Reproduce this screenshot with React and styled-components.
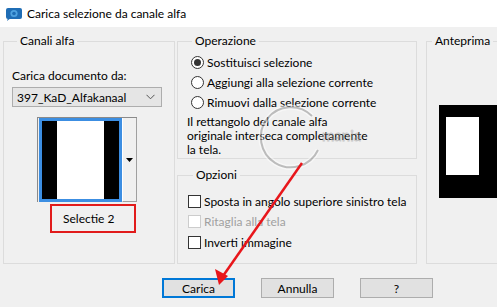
import React from 'react';
import styled, { createGlobalStyle } from 'styled-components';

const Global = createGlobalStyle`
  html, body { margin: 0; padding: 0; background: #f0f0f0; overflow: hidden; }
  body { font-family: Lato, "Noto Sans", sans-serif; font-size: 12px; color: #000; }
  * { box-sizing: border-box; }
`;

const Window = styled.div`
  position: relative;
  width: 540px;
  height: 307px;
  background: #f0f0f0;
  display: flex;
  flex-direction: column;
  overflow: hidden;
  white-space: nowrap;
`;

const TitleBar = styled.div`
  height: 27px;
  flex: none;
  background: #fff;
  display: flex;
  align-items: center;
  gap: 4px;
  padding-left: 5px;
  font-size: 12px;
`;

const Body = styled.div`
  display: flex;
  flex-direction: column;
  padding: 7px 0 0 3px;
`;

const Panels = styled.div`
  display: flex;
  align-items: flex-start;
`;

const Column = styled.div`
  display: flex;
  flex-direction: column;
  gap: ${p => p.$gap || 0}px;
  margin-left: ${p => p.$ml || 0}px;
`;

const Group = styled.fieldset`
  margin: 0;
  width: ${p => p.$w}px;
  height: ${p => p.$h}px;
  border: 1px solid #dcdcdc;
  padding: ${p => p.$pad || '0 0 0 8px'};
  display: flex;
  flex-direction: column;
  legend {
    margin-left: 5px;
    padding: 0 3px;
    line-height: 14px;
  }
`;

const Label = styled.div`
  margin-top: ${p => p.$mt || 0}px;
  line-height: 14px;
`;

const Select = styled.div`
  margin-top: 4px;
  width: 150px;
  height: 20px;
  border: 1px solid #adadad;
  background: #e5e5e5;
  display: flex;
  align-items: center;
  justify-content: space-between;
  padding: 0 6px 0 4px;
`;

const ThumbWrap = styled.div`
  margin: 10px 0 0 25px;
  width: 100px;
  height: 85px;
  display: flex;
  border-top: 1px solid #8a8a8a;
  border-left: 1px solid #8a8a8a;
`;

const ThumbImage = styled.div`
  width: 83px;
  height: 84px;
  border: 3px solid #3c8ee2;
  margin-left: 1px;
  display: flex;
`;

const Stripe = styled.div`
  width: ${p => p.$w}px;
  background: ${p => p.$c};
`;

const ThumbButton = styled.div`
  flex: 1;
  background: #f0f0f0;
  border-left: 1px solid #fff;
  border-right: 1px solid #a0a0a0;
  border-bottom: 1px solid #a0a0a0;
  display: flex;
  align-items: center;
  justify-content: center;
`;

const Highlight = styled.div`
  margin: 2px 0 0 38px;
  width: 86px;
  height: 29px;
  border: 2px solid #e11b1b;
  display: flex;
  align-items: center;
  padding-left: 11px;
`;

const OptionRow = styled.label`
  display: flex;
  align-items: center;
  gap: 3px;
  height: ${p => p.$h || 20}px;
  margin-left: ${p => p.$ml || 0}px;
  color: ${p => (p.$disabled ? '#a0a0a0' : '#000')};
`;

const Radio = styled.span`
  width: 13px;
  height: 13px;
  border: 1px solid #333;
  border-radius: 50%;
  background: #fff;
  display: flex;
  align-items: center;
  justify-content: center;
  &::after {
    content: '';
    width: 7px;
    height: 7px;
    border-radius: 50%;
    background: ${p => (p.$checked ? '#333' : 'transparent')};
  }
`;

const Check = styled.span`
  flex: none;
  width: 13px;
  height: 13px;
  border: 1px solid ${p => (p.$disabled ? '#cccccc' : '#333')};
  background: #fff;
`;

const Description = styled.div`
  margin-top: 3px;
  line-height: 14px;
`;

const Preview = styled.div`
  margin: 57px 0 0 12px;
  width: 72px;
  height: 93px;
  background: #000;
  padding: 12px 0 0 7px;
`;

const PreviewWhite = styled.div`
  width: 33px;
  height: 58px;
  background: #fff;
`;

const Buttons = styled.div`
  display: flex;
  gap: 26px;
  margin-top: 14px;
  padding-left: 159px;
`;

const Button = styled.div`
  width: 73px;
  height: 20px;
  background: #e1e1e1;
  border: ${p => (p.$default ? '2px solid #0078d7' : '1px solid #adadad')};
  display: flex;
  align-items: center;
  justify-content: center;
`;

const Overlay = styled.svg`
  position: absolute;
  left: 0;
  top: 0;
  pointer-events: none;
`;

function AppIcon() {
  return (
    <svg width="18" height="14" viewBox="0 0 18 14">
      <rect x="1" y="1" width="16" height="11" rx="2" fill="#1f6db5" />
      <path d="M3 11 L2 14 L6 11 Z" fill="#1f6db5" />
      <circle cx="9" cy="6.5" r="3.6" fill="#4fa3e0" />
      <circle cx="9" cy="6.5" r="1.8" fill="#1f6db5" />
    </svg>
  );
}

function Chevron() {
  return (
    <svg width="9" height="6" viewBox="0 0 9 6">
      <path d="M0.5 0.8 L4.5 4.8 L8.5 0.8" fill="none" stroke="#555" strokeWidth="1" />
    </svg>
  );
}

export default function App() {
  return (
    <>
      <Global />
      <Window>
        <TitleBar>
          <AppIcon />
          <span>Carica selezione da canale alfa</span>
        </TitleBar>
        <Body>
          <Panels>
            <Group $w={172} $h={230}>
              <legend>Canali alfa</legend>
              <Label $mt={21}>Carica documento da:</Label>
              <Select>
                <span>397_KaD_Alfakanaal</span>
                <Chevron />
              </Select>
              <ThumbWrap>
                <ThumbImage>
                  <Stripe $w={15} $c="#000" />
                  <Stripe $w={47} $c="#fff" />
                  <Stripe $w={15} $c="#000" />
                </ThumbImage>
                <ThumbButton>
                  <svg width="7" height="4" viewBox="0 0 7 4">
                    <path d="M0 0 H7 L3.5 4 Z" fill="#000" />
                  </svg>
                </ThumbButton>
              </ThumbWrap>
              <Highlight>Selectie 2</Highlight>
            </Group>
            <Column $gap={9} $ml={2}>
              <Group $w={240} $h={125} $pad="0 0 0 9px">
                <legend>Operazione</legend>
                <OptionRow $ml={4} style={{ marginTop: 4 }}>
                  <Radio $checked />
                  Sostituisci selezione
                </OptionRow>
                <OptionRow $ml={4}>
                  <Radio />
                  Aggiungi alla selezione corrente
                </OptionRow>
                <OptionRow $ml={4}>
                  <Radio />
                  Rimuovi dalla selezione corrente
                </OptionRow>
                <Description>
                  Il rettangolo del canale alfa
                  <br />
                  originale interseca completamente
                  <br />
                  la tela.
                </Description>
              </Group>
              <Group $w={240} $h={96} $pad="0 0 0 10px">
                <legend>Opzioni</legend>
                <OptionRow $h={20.5} style={{ marginTop: 9 }}>
                  <Check />
                  Sposta in angolo superiore sinistro tela
                </OptionRow>
                <OptionRow $h={20.5} $disabled>
                  <Check $disabled />
                  Ritaglia alla tela
                </OptionRow>
                <OptionRow $h={20.5}>
                  <Check />
                  Inverti immagine
                </OptionRow>
              </Group>
            </Column>
            <Column $ml={9}>
              <Group $w={110} $h={230} $pad="0">
                <legend>Anteprima</legend>
                <Preview>
                  <PreviewWhite />
                </Preview>
              </Group>
            </Column>
          </Panels>
          <Buttons>
            <Button $default>Carica</Button>
            <Button>Annulla</Button>
            <Button>?</Button>
          </Buttons>
        </Body>
        <Overlay width="540" height="307" viewBox="0 0 540 307">
          <g opacity="0.5">
            <path d="M312 116 A30 30 0 1 0 318 150" fill="none" stroke="#fff" strokeWidth="5" />
            <path d="M312 116 A30 30 0 1 0 318 150" fill="none" stroke="#8a8a8a" strokeWidth="2" />
            <text x="322" y="141" fontFamily="Lato, sans-serif" fontSize="15" fill="none" stroke="#9a9a9a" strokeWidth="0.8">
              mania
            </text>
          </g>
          <line x1="302" y1="163" x2="223" y2="276" stroke="#e8161b" strokeWidth="2.5" />
          <path d="M219 285 L215 269 L228 276 Z" fill="#e8161b" />
        </Overlay>
      </Window>
    </>
  );
}
